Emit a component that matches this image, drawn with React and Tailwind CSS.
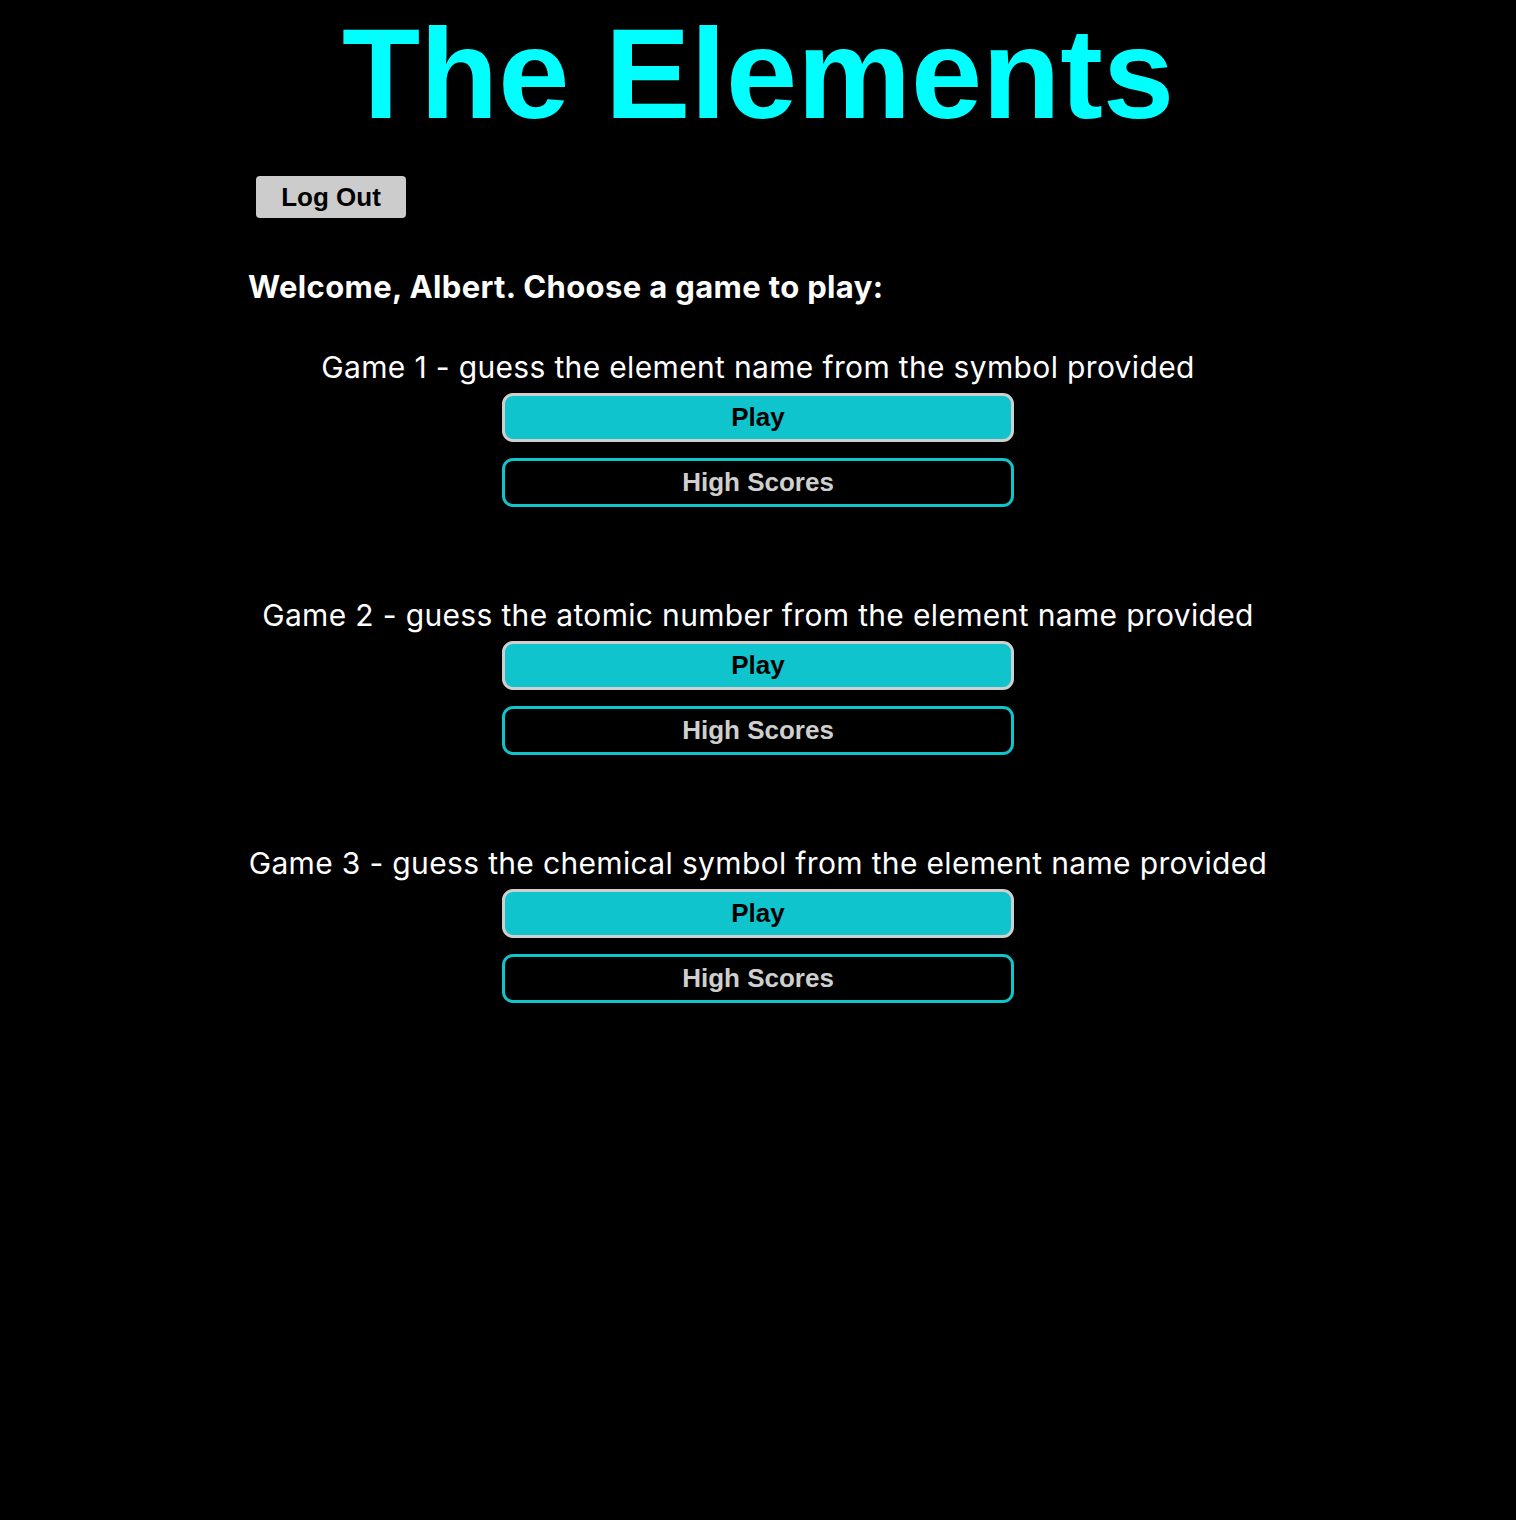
const games = [
  "Game 1 - guess the element name from the symbol provided",
  "Game 2 - guess the atomic number from the element name provided",
  "Game 3 - guess the chemical symbol from the element name provided",
];

function GameBlock({ title }) {
  return (
    <div className="flex flex-col items-center">
      <p className="text-[30px] leading-[36px] tracking-[0.34px] text-white font-['Inter',sans-serif] whitespace-nowrap">
        {title}
      </p>
      <button
        type="button"
        className="mt-[8px] w-[512px] h-[49px] rounded-[11px] border-[3px] border-[#cfcfcf] bg-[#0fc4cc] text-black text-[26px] font-bold font-['Liberation_Sans',Arial,sans-serif]"
      >
        Play
      </button>
      <button
        type="button"
        className="mt-[16px] w-[512px] h-[49px] rounded-[11px] border-[3px] border-[#0fc4cc] bg-black text-[#cfcfcf] text-[26px] font-bold font-['Liberation_Sans',Arial,sans-serif]"
      >
        High Scores
      </button>
    </div>
  );
}

export default function App() {
  return (
    <div className="min-h-[1520px] bg-black">
      <h1 className="text-center text-[128px] leading-[147px] font-bold text-[#00ffff] font-['Liberation_Sans',Arial,sans-serif]">
        The Elements
      </h1>
      <div className="w-[1020px] mx-auto mt-[29px]">
        <button
          type="button"
          className="ml-[8px] w-[150px] h-[42px] rounded-[4px] bg-[#cccccc] text-black text-[26px] font-bold font-['Liberation_Sans',Arial,sans-serif]"
        >
          Log Out
        </button>
        <p className="mt-[51px] text-[31px] leading-[36px] tracking-[0.36px] font-bold text-white font-['Inter',sans-serif]">
          Welcome, Albert. Choose a game to play:
        </p>
        <div className="mt-[44px] flex flex-col gap-[90px]">
          {games.map((g) => (
            <GameBlock key={g} title={g} />
          ))}
        </div>
      </div>
    </div>
  );
}
